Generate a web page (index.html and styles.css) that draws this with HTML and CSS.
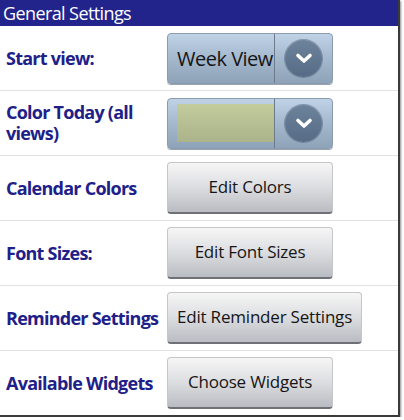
FILE: index.html
```html
<!DOCTYPE html>
<html>
<head>
<meta charset="utf-8">
<link rel="stylesheet" href="styles.css">
</head>
<body>
<div class="frame">
  <div class="header">General Settings</div>
  <div class="row">
    <div class="label">Start view:</div>
    <div class="spinner">
      <div class="spin-value"><span class="spin-text">Week View</span></div>
      <div class="spin-arrow"><span class="circle"><svg viewBox="0 0 20 20" width="20" height="20"><path d="M4 7.5 L10 13 L16 7.5" fill="none" stroke="#fff" stroke-width="3.6" stroke-linecap="round" stroke-linejoin="round"/></svg></span></div>
    </div>
  </div>
  <div class="row">
    <div class="label">Color Today (all views)</div>
    <div class="spinner">
      <div class="spin-value"><span class="swatch"></span></div>
      <div class="spin-arrow"><span class="circle"><svg viewBox="0 0 20 20" width="20" height="20"><path d="M4 7.5 L10 13 L16 7.5" fill="none" stroke="#fff" stroke-width="3.6" stroke-linecap="round" stroke-linejoin="round"/></svg></span></div>
    </div>
  </div>
  <div class="row">
    <div class="label">Calendar Colors</div>
    <div class="btn btn-fixed">Edit Colors</div>
  </div>
  <div class="row">
    <div class="label">Font Sizes:</div>
    <div class="btn btn-fixed">Edit Font Sizes</div>
  </div>
  <div class="row">
    <div class="label">Reminder Settings</div>
    <div class="btn">Edit Reminder Settings</div>
  </div>
  <div class="row last">
    <div class="label">Available Widgets</div>
    <div class="btn btn-fixed">Choose Widgets</div>
  </div>
</div>
</body>
</html>
```
FILE: styles.css
```css
html, body {
  margin: 0;
  padding: 0;
  background: #ffffff;
}
.frame {
  width: 400px;
  height: 417px;
  box-sizing: border-box;
  border-right: 2px solid #3a3a3a;
  border-bottom: 2px solid #3a3a3a;
  box-shadow: 1px 1px 2px rgba(0,0,0,0.45);
  background: #fff;
  font-family: "Open Sans", "DejaVu Sans", sans-serif;
  overflow: hidden;
}
.header {
  height: 26px;
  background: #23238c;
  color: #fff;
  font-size: 18px;
  line-height: 26px;
  padding-left: 3px;
  letter-spacing: -0.6px;
}
.row {
  height: 64px;
  border-bottom: 1px solid #e2e2e2;
  display: flex;
  align-items: center;
}
.row:first-of-type {
  height: 65px;
}
.row.last {
  border-bottom: none;
}
.label {
  width: 161px;
  padding-left: 6px;
  color: #202088;
  font-weight: bold;
  font-size: 18px;
  line-height: 21px;
  letter-spacing: -0.75px;
}
.spinner {
  width: 166px;
  height: 51px;
  box-sizing: border-box;
  border: 1px solid #8a9bb0;
  border-radius: 4px;
  background: linear-gradient(#bfd2e6, #9fb3c9 60%, #8ea2b8);
  display: flex;
  box-shadow: 0 1px 0 #9aa4b0;
}
.spin-value {
  width: 107px;
  flex: none;
  border-right: 1px solid #6c7a8a;
  display: flex;
  align-items: center;
  padding-left: 9px;
  box-sizing: border-box;
  overflow: hidden;
}
.spin-text {
  font-size: 20px;
  color: #151515;
  letter-spacing: -0.5px;
  white-space: nowrap;
}
.swatch {
  width: 97px;
  height: 38px;
  background: linear-gradient(#c3cc9c, #aab38a);
}
.spin-arrow {
  flex: 1;
  display: flex;
  align-items: center;
  justify-content: center;
}
.circle {
  width: 37px;
  height: 37px;
  border-radius: 50%;
  background: linear-gradient(#6d829b, #566b85);
  box-shadow: 0 0 0 1px rgba(80,95,115,0.5);
  display: flex;
  align-items: center;
  justify-content: center;
}
.circle svg {
  display: block;
}
.btn {
  height: 52px;
  box-sizing: border-box;
  border: 1px solid #c4c6ca;
  border-bottom: 2px solid #6e7076;
  border-radius: 4px;
  background: linear-gradient(#f6f6f6, #dcdde0 50%, #b9bcc2);
  color: #151515;
  font-size: 17px;
  display: flex;
  align-items: center;
  justify-content: center;
  padding: 0 9px 2px;
  letter-spacing: -0.2px;
  white-space: nowrap;
}
.btn-fixed {
  width: 166px;
}
```
